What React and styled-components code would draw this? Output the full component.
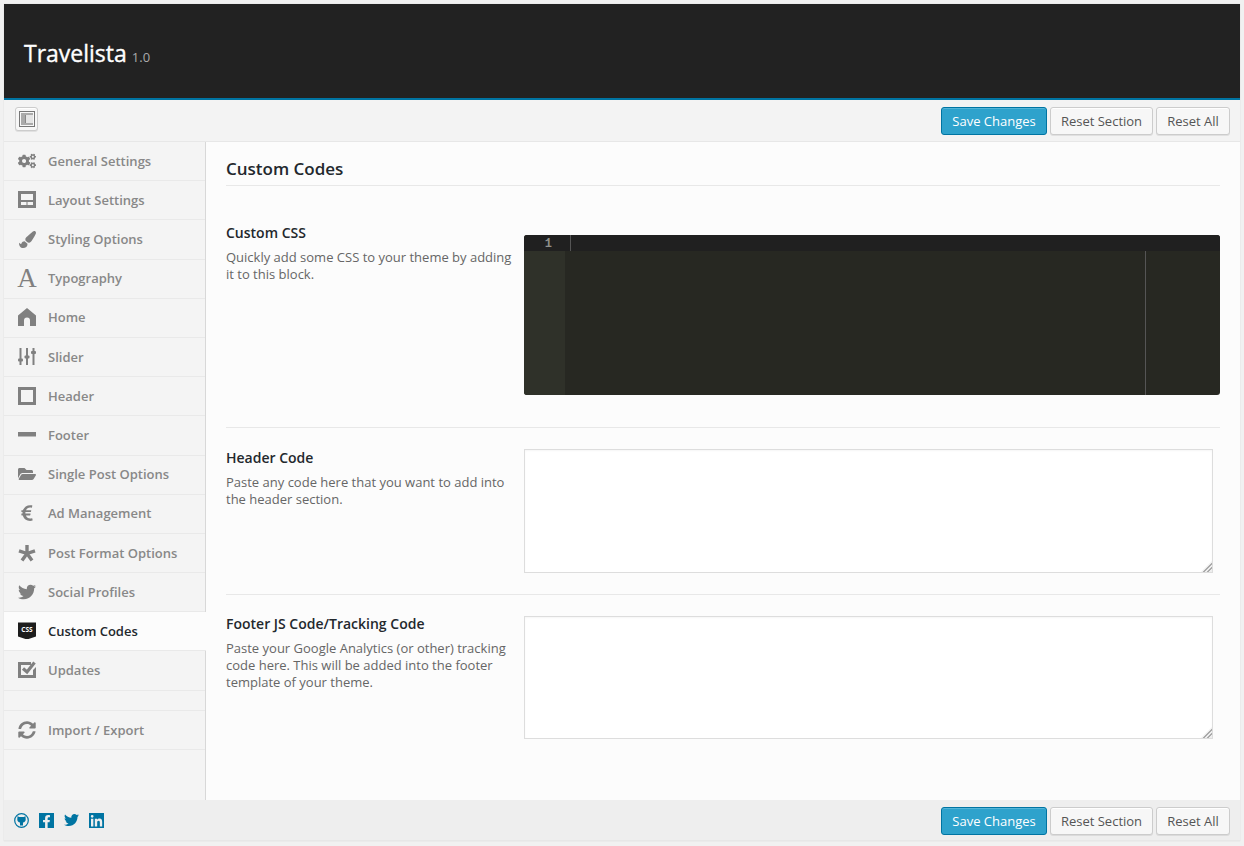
import React from 'react'
import styled, { createGlobalStyle } from 'styled-components'
import {
  FaCogs, FaPaintBrush, FaFolderOpen, FaEuroSign, FaTwitter, FaSyncAlt, FaFacebookF, FaLinkedinIn,
} from 'react-icons/fa'

const GlobalStyle = createGlobalStyle`
  html, body { margin: 0; padding: 0; background: #f1f1f1; }
  body { font-family: "Open Sans", "Liberation Sans", sans-serif; font-size: 13px; color: #555; }
  * { box-sizing: border-box; }
`

const Panel = styled.div`
  width: 1236px;
  height: 837px;
  margin: 4px 4px 5px;
  display: flex;
  flex-direction: column;
  box-shadow: 0 0 1px #ccc;
`

const Header = styled.header`
  height: 96px;
  flex: none;
  background: #222;
  border-bottom: 2px solid #0074a2;
  padding: 34px 20px 0;
  color: #fff;
`

const Title = styled.span`
  font-size: 23px;
  line-height: 30px;
  font-weight: 400;
  color: #fff;
  -webkit-text-stroke: .35px #fff;
`

const Version = styled.span`
  font-size: 13px;
  color: #aaa;
  margin-left: 5px;
`

const Bar = styled.div`
  height: ${p => (p.$bottom ? '41px' : '42px')};
  flex: none;
  background: ${p => (p.$bottom ? '#eee' : '#f3f3f3')};
  border-bottom: 1px solid #e7e7e7;
  display: flex;
  align-items: center;
  justify-content: space-between;
  padding: ${p => (p.$bottom ? '2px 10px 0' : '0 10px 0 11px')};
`

const Actions = styled.div`
  display: flex;
  gap: 3px;
`

const Button = styled.button`
  height: 28px;
  padding: 0;
  width: ${p => p.$w}px;
  font-family: inherit;
  font-size: 13px;
  line-height: 26px;
  border-radius: 3px;
  border: 1px solid ${p => (p.$primary ? '#0074a2' : '#ccc')};
  background: ${p => (p.$primary ? '#2ea2cc' : '#f7f7f7')};
  color: ${p => (p.$primary ? '#fff' : '#555')};
  box-shadow: ${p => (p.$primary ? 'inset 0 1px 0 rgba(120,200,230,.5)' : 'inset 0 1px 0 #fff, 0 1px 0 rgba(0,0,0,.08)')};
`

const ToggleButton = styled.button`
  width: 23px;
  height: 24px;
  padding: 0;
  margin-bottom: 4px;
  border: 1px solid #ccc;
  border-radius: 3px;
  background: #f7f7f7;
  box-shadow: inset 0 1px 0 #fff, 0 1px 0 rgba(0,0,0,.08);
  display: flex;
  align-items: center;
  justify-content: center;
`

const Body = styled.div`
  flex: 1;
  display: flex;
  min-height: 0;
`

const Sidebar = styled.nav`
  width: 202px;
  flex: none;
  background: #f4f4f4;
  border-right: 1px solid #d8d8d8;
`

const NavItem = styled.a`
  height: 39.2px;
  display: flex;
  align-items: center;
  gap: 12px;
  padding: 0 0 .8px 14px;
  border-bottom: 1px solid #e9e9e9;
  font-weight: 600;
  font-size: 13px;
  color: ${p => (p.$active ? '#23282d' : '#888')};
  background: ${p => (p.$active ? '#fcfcfc' : 'transparent')};
  margin-right: ${p => (p.$active ? '-1px' : '0')};
  position: relative;
`

const NavSpacer = styled.div`
  height: 20.5px;
  border-bottom: 1px solid #e9e9e9;
`

const IconSlot = styled.span`
  width: 18px;
  height: 20px;
  flex: none;
  display: flex;
  align-items: center;
  justify-content: center;
  color: #808080;
  font-size: ${p => p.$size || 16}px;
`

const LetterIcon = styled.span`
  font-family: "Liberation Serif", serif;
  font-size: 27px;
  font-weight: 400;
  line-height: 20px;
  color: #808080;
`

const Main = styled.main`
  flex: 1;
  background: #fcfcfc;
  padding: 0 20px;
`

const SectionTitle = styled.h2`
  margin: 0;
  height: 44px;
  padding-top: 15px;
  font-size: 17px;
  line-height: 23px;
  font-weight: 600;
  color: #23282d;
  border-bottom: 1px solid #e8e8e8;
`

const FieldRow = styled.div`
  display: grid;
  grid-template-columns: 298px 1fr;
  padding-top: ${p => p.$top}px;
  padding-bottom: ${p => p.$bottom || 0}px;
  border-bottom: ${p => (p.$last ? 'none' : '1px solid #e8e8e8')};
`

const FieldLabel = styled.div`
  font-size: 14px;
  line-height: 20px;
  font-weight: 600;
  color: #23282d;
`

const FieldDesc = styled.p`
  margin: 6px 0 0;
  width: 290px;
  font-size: 13px;
  line-height: 17px;
  color: #666;
`

const Editor = styled.div`
  height: 160px;
  margin-top: 12px;
  background: #272822;
  border-radius: 3px;
  overflow: hidden;
  display: grid;
  grid-template-columns: 41px 1fr;
  grid-template-rows: 16px 1fr;
  position: relative;
`

const GutterCell = styled.div`
  background: #2f3129;
`

const ActiveGutter = styled.div`
  background: #202020;
  color: #8f908a;
  font-family: "Liberation Mono", monospace;
  font-size: 12px;
  font-weight: 700;
  line-height: 16px;
  text-align: right;
  padding: 1px 13px 0 0;
`

const ActiveLine = styled.div`
  background: #202020;
  position: relative;
  &::before {
    content: '';
    position: absolute;
    left: 5px;
    top: 0;
    width: 1px;
    height: 16px;
    background: #555;
  }
`

const PrintMargin = styled.div`
  position: absolute;
  left: 621px;
  top: 16px;
  bottom: 0;
  width: 1px;
  background: #555;
`

const CodeWrap = styled.div`
  position: relative;
  width: 689px;
  height: ${p => p.$h}px;
  margin-top: ${p => p.$top}px;
  &::after {
    content: '';
    position: absolute;
    right: 1px;
    bottom: 1px;
    width: 11px;
    height: 11px;
    clip-path: polygon(100% 0, 100% 100%, 0 100%);
    background: repeating-linear-gradient(135deg, #aaa 0 1px, #eee 1px 3px);
    pointer-events: none;
  }
`

const CodeArea = styled.textarea`
  display: block;
  width: 100%;
  height: 100%;
  margin: 0;
  resize: none;
  background: #fff;
  border: 1px solid #ddd;
  box-shadow: inset 0 1px 2px rgba(0,0,0,.04);
  font-family: "Liberation Mono", monospace;
`

const FooterIcons = styled.div`
  display: flex;
  align-items: center;
  gap: 10px;
  margin-top: -2px;
`

const SocialLink = styled.a`
  width: 15px;
  height: 15px;
  display: flex;
  overflow: hidden;
  font-size: ${p => p.$size || 13}px;
  align-items: ${p => (p.$filled ? 'flex-end' : 'center')};
  justify-content: ${p => (p.$filled ? 'flex-end' : 'center')};
  padding: ${p => (p.$filled ? '0 1px 0 0' : '0')};
  background: ${p => (p.$filled ? '#0074a2' : 'transparent')};
  color: ${p => (p.$filled ? '#eee' : '#0074a2')};
`

const BadgeWrap = styled.span`
  width: 18px;
  height: 17px;
  background: #1d1d1d;
  clip-path: polygon(0 0, 100% 0, 100% 82%, 50% 100%, 0 82%);
  color: #fff;
  font-size: 6.5px;
  line-height: 15px;
  font-weight: 700;
  text-align: center;
`

const LayoutIcon = () => (
  <svg width="18" height="17" viewBox="0 0 18 17">
    <path fill="#808080" fillRule="evenodd" d="M0 0h18v17H0zM3 3h12v6H3zM3 11h5.500v3H3zM9.500 11H15v3H9.500z" />
  </svg>
)

const ToggleIcon = () => (
  <svg width="16" height="16" viewBox="0 0 16 16">
    <path fill="#777" fillRule="evenodd" d="M0 0h16v16H0zM1 1v14h14V1z" />
    <path fill="#aaa" d="M2 2h12v2H2zM2 12h12v2H2zM2 4h4v8H2z" />
    <path fill="#888" d="M6 4h1v8H6z" />
    <path fill="#e4e4e4" d="M7 4h7v8H7z" />
  </svg>
)

const HomeIcon = () => (
  <svg width="18" height="18" viewBox="0 0 18 18">
    <path fill="#808080" d="M9 0 18 7.500V18H12V12.500A3 3 0 0 0 6 12.500V18H0V7.500z" />
  </svg>
)

const SliderIcon = () => (
  <svg width="18" height="18" viewBox="0 0 18 18">
    <g fill="#808080">
      <rect x="1.500" y="0" width="2" height="17" />
      <rect x="8" y="0" width="2" height="17" />
      <rect x="14.500" y="0" width="2" height="17" />
      <rect x="0" y="10.500" width="5" height="3" rx="1" />
      <rect x="6.500" y="7.500" width="5" height="3" rx="1" />
      <rect x="13" y="3" width="5" height="3" rx="1" />
    </g>
  </svg>
)

const SquareIcon = () => (
  <svg width="18" height="18" viewBox="0 0 18 18">
    <path fill="#808080" fillRule="evenodd" d="M0 0h18v18H0zM3 3v12h12V3z" />
  </svg>
)

const MinusIcon = () => (
  <svg width="18" height="18" viewBox="0 0 18 18">
    <rect y="6" width="18" height="4.500" fill="#808080" />
  </svg>
)

const AsteriskIcon = () => (
  <svg width="18" height="18" viewBox="0 0 18 18">
    <path stroke="#808080" strokeWidth="3.400" fill="none" d="M9 9.500V1M9 9.500 1 6.800M9 9.500 17 6.800M9 9.500 4 16.500M9 9.500 14 16.500" />
  </svg>
)

const UpdatesIcon = () => (
  <svg width="18" height="18" viewBox="0 0 18 18">
    <path fill="#808080" d="M0 1h13v3H3v10h12v-5l3-3v11H0z" />
    <path stroke="#808080" strokeWidth="3.200" fill="none" d="M5 7.500 9 11 16.500 1.500" />
  </svg>
)

const OctoIcon = () => (
  <svg width="15" height="15" viewBox="0 0 15 15">
    <circle cx="7.500" cy="7.500" r="6.800" fill="none" stroke="#0074a2" strokeWidth="1.200" />
    <path fill="#0074a2" d="M3.500 3 5 4h5l1.500-1 .2 3.400c0 1.800-1.200 2.800-2.700 3.100v3H6v-3C4.500 9.200 3.300 8.200 3.300 6.400z" />
  </svg>
)

const items = [
  { label: 'General Settings', icon: <FaCogs />, size: 18 },
  { label: 'Layout Settings', icon: <LayoutIcon /> },
  { label: 'Styling Options', icon: <FaPaintBrush />, size: 17 },
  { label: 'Typography', icon: <LetterIcon>A</LetterIcon> },
  { label: 'Home', icon: <HomeIcon /> },
  { label: 'Slider', icon: <SliderIcon /> },
  { label: 'Header', icon: <SquareIcon /> },
  { label: 'Footer', icon: <MinusIcon /> },
  { label: 'Single Post Options', icon: <FaFolderOpen />, size: 18 },
  { label: 'Ad Management', icon: <FaEuroSign />, size: 18 },
  { label: 'Post Format Options', icon: <AsteriskIcon /> },
  { label: 'Social Profiles', icon: <FaTwitter />, size: 18 },
  { label: 'Custom Codes', icon: <BadgeWrap>CSS</BadgeWrap>, active: true },
  { label: 'Updates', icon: <UpdatesIcon /> },
]

const ActionButtons = () => (
  <Actions>
    <Button $primary $w={106}>Save Changes</Button>
    <Button $w={103}>Reset Section</Button>
    <Button $w={74}>Reset All</Button>
  </Actions>
)

const NavRow = ({ item }) => (
  <NavItem $active={item.active}>
    <IconSlot $size={item.size}>{item.icon}</IconSlot>
    {item.label}
  </NavItem>
)

export default function App() {
  return (
    <>
      <GlobalStyle />
      <Panel>
        <Header>
          <Title>Travelista</Title>
          <Version>1.0</Version>
        </Header>
        <Bar>
          <ToggleButton><ToggleIcon /></ToggleButton>
          <ActionButtons />
        </Bar>
        <Body>
          <Sidebar>
            {items.map(item => <NavRow key={item.label} item={item} />)}
            <NavSpacer />
            <NavRow item={{ label: 'Import / Export', icon: <FaSyncAlt />, size: 18 }} />
          </Sidebar>
          <Main>
            <SectionTitle>Custom Codes</SectionTitle>
            <FieldRow $top={37} $bottom={32}>
              <div>
                <FieldLabel>Custom CSS</FieldLabel>
                <FieldDesc>Quickly add some CSS to your theme by adding it to this block.</FieldDesc>
              </div>
              <Editor>
                <ActiveGutter>1</ActiveGutter>
                <ActiveLine />
                <GutterCell />
                <div />
                <PrintMargin />
              </Editor>
            </FieldRow>
            <FieldRow $top={20} $bottom={21}>
              <div>
                <FieldLabel>Header Code</FieldLabel>
                <FieldDesc>Paste any code here that you want to add into the header section.</FieldDesc>
              </div>
              <CodeWrap $top={1} $h={124}><CodeArea /></CodeWrap>
            </FieldRow>
            <FieldRow $top={19} $last>
              <div>
                <FieldLabel>Footer JS Code/Tracking Code</FieldLabel>
                <FieldDesc>Paste your Google Analytics (or other) tracking code here. This will be added into the footer template of your theme.</FieldDesc>
              </div>
              <CodeWrap $top={2} $h={123}><CodeArea /></CodeWrap>
            </FieldRow>
          </Main>
        </Body>
        <Bar $bottom>
          <FooterIcons>
            <SocialLink><OctoIcon /></SocialLink>
            <SocialLink $filled $size={13}><FaFacebookF /></SocialLink>
            <SocialLink $size={16}><FaTwitter /></SocialLink>
            <SocialLink $filled $size={13}><FaLinkedinIn /></SocialLink>
          </FooterIcons>
          <ActionButtons />
        </Bar>
      </Panel>
    </>
  )
}
